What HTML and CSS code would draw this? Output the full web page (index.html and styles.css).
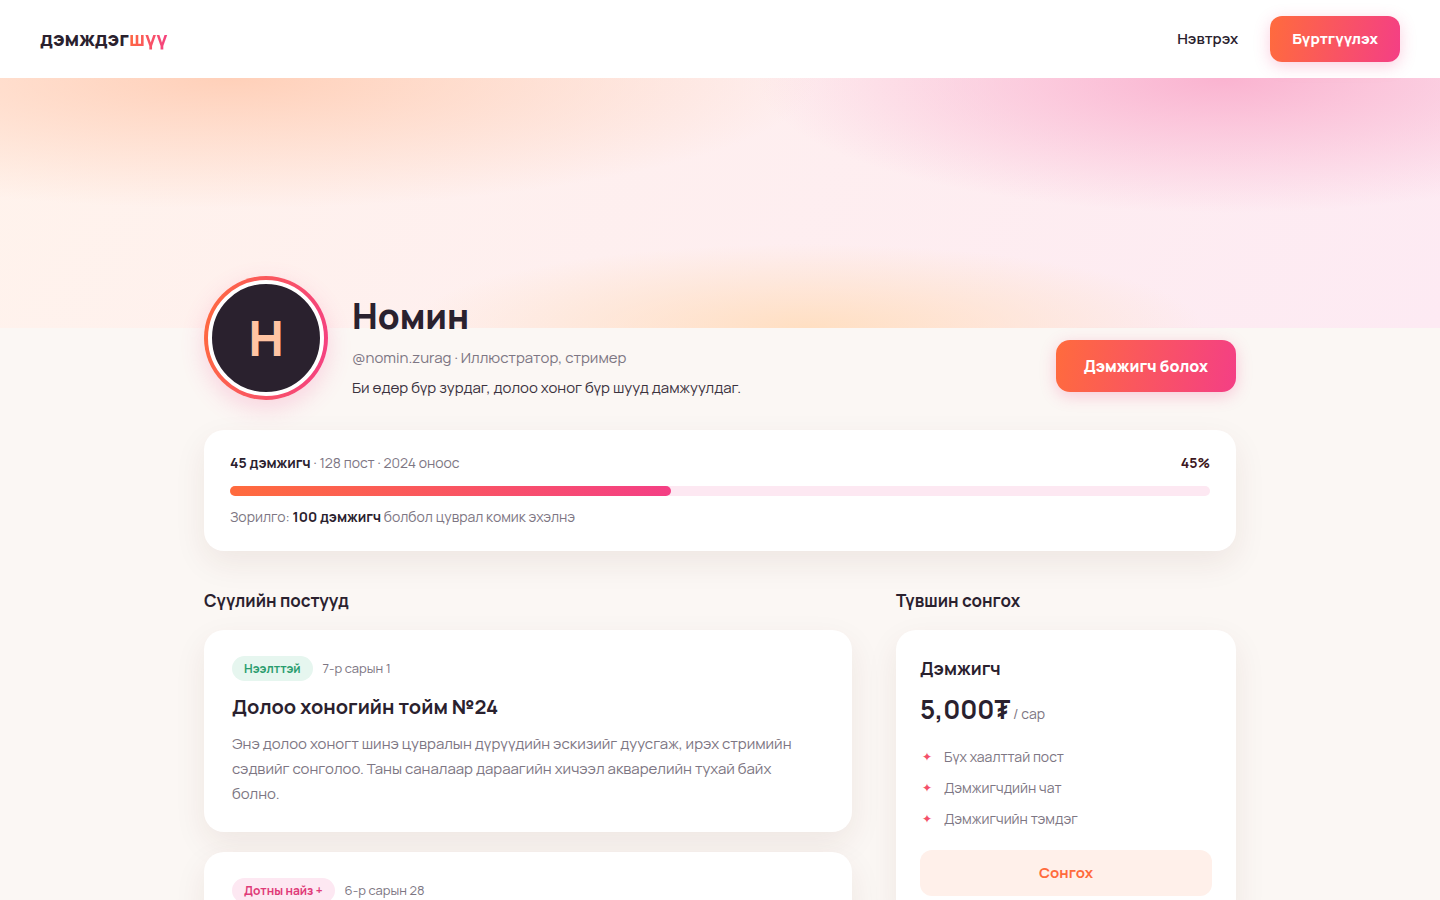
FILE: index.html
```html
<!DOCTYPE html>
<html lang="mn">
<head>
    <meta charset="UTF-8">
    <meta name="viewport" content="width=device-width, initial-scale=1.0">
    <title>Номин - дэмждэгшүү</title>
    <link rel="stylesheet" href="styles.css">
</head>
<body>
    <header class="nav">
        <a class="logo" href="#">дэмждэг<span>шүү</span></a>
        <nav class="nav-links">
            <a class="nav-login" href="#">Нэвтрэх</a>
            <button class="btn btn-primary" type="button">Бүртгүүлэх</button>
        </nav>
    </header>

    <div class="cover"></div>

    <main class="container">
        <section class="profile">
            <div class="avatar"><div class="avatar-inner">Н</div></div>
            <div class="profile-info">
                <h1>Номин</h1>
                <p class="handle">@nomin.zurag · Иллюстратор, стример</p>
                <p class="bio">Би өдөр бүр зурдаг, долоо хоног бүр шууд дамжуулдаг.</p>
            </div>
            <button class="btn btn-primary btn-large" type="button">Дэмжигч болох</button>
        </section>

        <section class="goal">
            <div class="goal-top">
                <span><strong>45 дэмжигч</strong> · 128 пост · 2024 оноос</span>
                <strong class="goal-percent">45%</strong>
            </div>
            <div class="goal-bar"><div class="goal-fill" style="width: 45%"></div></div>
            <p>Зорилго: <strong>100 дэмжигч</strong> болбол цуврал комик эхэлнэ</p>
        </section>

        <div class="columns">
            <section class="posts">
                <h2>Сүүлийн постууд</h2>
                <article class="post">
                    <div class="post-meta">
                        <span class="badge badge-open">Нээлттэй</span>
                        <time>7-р сарын 1</time>
                    </div>
                    <h3>Долоо хоногийн тойм №24</h3>
                    <p>Энэ долоо хоногт шинэ цувралын дүрүүдийн эскизийг дуусгаж, ирэх стримийн сэдвийг сонголоо. Таны саналаар дараагийн хичээл акварелийн тухай байх болно.</p>
                </article>
                <article class="post">
                    <div class="post-meta">
                        <span class="badge badge-locked">Дотны найз +</span>
                        <time>6-р сарын 28</time>
                    </div>
                </article>
            </section>

            <aside class="tiers">
                <h2>Түвшин сонгох</h2>
                <div class="tier">
                    <h3>Дэмжигч</h3>
                    <div class="price">5,000₮<span> / сар</span></div>
                    <ul>
                        <li>Бүх хаалттай пост</li>
                        <li>Дэмжигчдийн чат</li>
                        <li>Дэмжигчийн тэмдэг</li>
                    </ul>
                    <button class="btn btn-soft" type="button">Сонгох</button>
                </div>
            </aside>
        </div>
    </main>
</body>
</html>
```
FILE: styles.css
```css
:root {
    --ink: #2a212e;
    --muted: #7d7683;
    --bg: #fbf7f4;
    --orange: #ff6b3d;
    --pink: #f43f85;
    --gradient: linear-gradient(100deg, var(--orange), var(--pink));
    --shadow: 0 12px 32px rgba(90, 40, 20, 0.08);
}

* {
    margin: 0;
    padding: 0;
    box-sizing: border-box;
}

body {
    font-family: 'Manrope', 'Inter', sans-serif;
    font-size: 15px;
    line-height: 24px;
    background: var(--bg);
    color: var(--ink);
}

a {
    color: inherit;
    text-decoration: none;
}

.nav {
    display: flex;
    justify-content: space-between;
    align-items: center;
    padding: 16px 40px;
    background: #fff;
}

.logo {
    font-size: 20px;
    font-weight: 800;
}

.logo span {
    background: var(--gradient);
    -webkit-background-clip: text;
    background-clip: text;
    color: transparent;
}

.nav-links {
    display: flex;
    align-items: center;
    gap: 32px;
}

.nav-login {
    font-weight: 600;
}

.btn {
    border: none;
    border-radius: 12px;
    padding: 12px 22px;
    font: inherit;
    font-size: 15px;
    line-height: 22px;
    font-weight: 700;
    cursor: pointer;
}

.btn-primary {
    background: var(--gradient);
    color: #fff;
    font-weight: 800;
    box-shadow: 0 4px 16px rgba(244, 63, 133, 0.25);
}

.btn-large {
    padding: 14px 28px;
    font-size: 16px;
    line-height: 24px;
    border-radius: 14px;
    margin-bottom: 8px;
}

.btn-soft {
    width: 100%;
    background: #fff0ea;
    color: var(--orange);
}

.cover {
    height: 250px;
    background:
        radial-gradient(68% 87% at 16% 0%, #ffd0b9, transparent 60%),
        radial-gradient(54% 90% at 85% 0%, #fab3d0, transparent 60%),
        radial-gradient(46% 56% at 56% 100%, #ffdfc2, transparent 60%),
        linear-gradient(120deg, #fff3ec, #fdeaf3);
}

.container {
    max-width: 1080px;
    margin: 0 auto;
    padding: 0 24px 64px;
}

.profile {
    display: flex;
    align-items: flex-end;
    gap: 24px;
    margin-top: -52px;
    margin-bottom: 30px;
}

.avatar {
    width: 124px;
    height: 124px;
    padding: 4px;
    border-radius: 50%;
    background: var(--gradient);
    box-shadow: 0 8px 24px rgba(244, 63, 133, 0.2);
}

.avatar-inner {
    display: flex;
    align-items: center;
    justify-content: center;
    height: 100%;
    border: 4px solid #fff;
    border-radius: 50%;
    background: var(--ink);
    color: #ffc4a3;
    font-size: 48px;
    font-weight: 800;
}

.profile-info {
    flex: 1;
}

.profile-info h1 {
    font-size: 35px;
    line-height: 44px;
    font-weight: 800;
    margin-bottom: 8px;
}

.handle {
    color: var(--muted);
    margin-bottom: 6px;
}

.bio {
    color: #3a323e;
}

.goal {
    background: #fff;
    border-radius: 20px;
    padding: 22px 26px 23px;
    box-shadow: var(--shadow);
    font-size: 14px;
    line-height: 22px;
    color: var(--muted);
    margin-bottom: 36px;
}

.goal strong {
    color: var(--ink);
    font-weight: 700;
}

.goal .goal-percent {
    color: #3d1822;
}

.goal-top {
    display: flex;
    justify-content: space-between;
}

.goal-bar {
    height: 10px;
    margin: 12px 0 10px;
    border-radius: 5px;
    background: #fde8f2;
}

.goal-fill {
    height: 100%;
    border-radius: 5px;
    background: var(--gradient);
}

.columns {
    display: grid;
    grid-template-columns: 1fr 340px;
    gap: 44px;
}

h2 {
    font-size: 17px;
    line-height: 28px;
    font-weight: 700;
    margin-bottom: 15px;
}

.post,
.tier {
    background: #fff;
    border-radius: 20px;
    box-shadow: var(--shadow);
}

.post {
    padding: 26px 32px 26px 28px;
    margin-bottom: 20px;
}

.post-meta {
    display: flex;
    align-items: flex-start;
    gap: 10px;
    font-size: 13px;
    color: var(--muted);
    margin-bottom: 12px;
}

.badge {
    padding: 0 12px;
    border-radius: 13px;
    font-size: 12px;
    line-height: 25px;
    font-weight: 700;
}

.badge-open {
    background: #e6f6ef;
    color: #2a9d6e;
}

.badge-locked {
    background: #fde8f2;
    color: #e03a78;
}

.post h3 {
    font-size: 20px;
    line-height: 28px;
    font-weight: 700;
    margin-bottom: 10px;
}

.post p {
    line-height: 25px;
    color: var(--muted);
}

.tier {
    padding: 24px;
}

.tier h3 {
    font-size: 18px;
    line-height: 28px;
    font-weight: 700;
}

.price {
    font-size: 26px;
    line-height: 36px;
    font-weight: 700;
    margin: 9px 0 18px;
}

.price span {
    font-size: 14px;
    line-height: 14px;
    font-weight: 400;
    color: var(--muted);
}

.tier ul {
    list-style: none;
    margin-bottom: 19px;
}

.tier li {
    display: flex;
    font-size: 14px;
    color: var(--muted);
    margin-bottom: 7px;
}

.tier li::before {
    content: '✦';
    width: 22px;
    flex-shrink: 0;
    padding-left: 2px;
    font-size: 12px;
    color: #f4506a;
}
```
